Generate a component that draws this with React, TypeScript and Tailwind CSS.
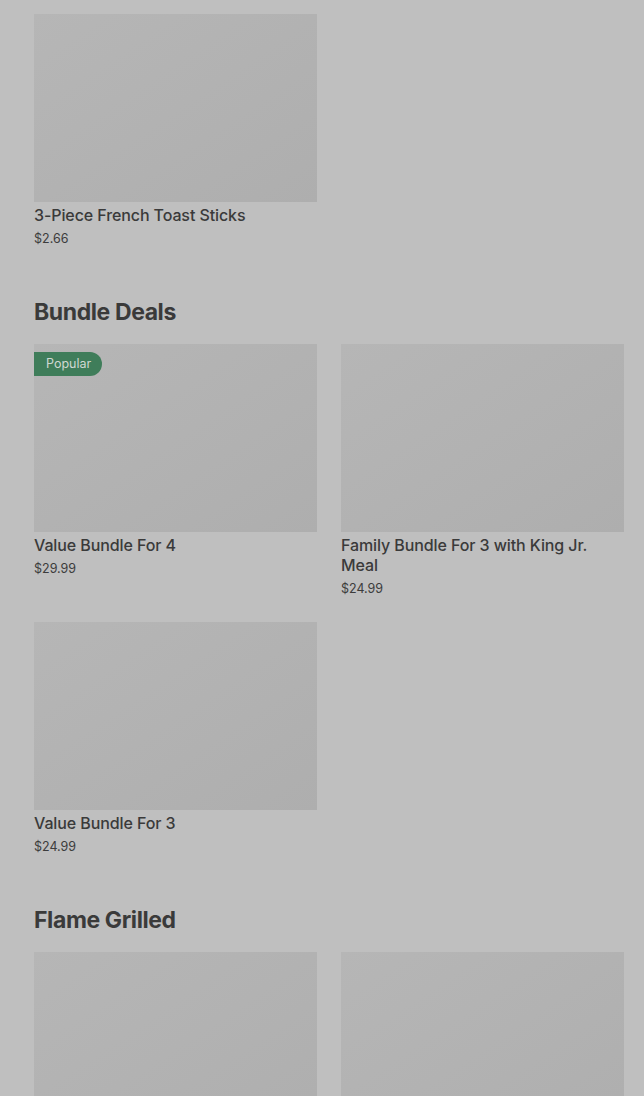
type Item = { name?: string; price?: string; badge?: string };

const sections: { title?: string; items: Item[] }[] = [
  { items: [{ name: "3-Piece French Toast Sticks", price: "$2.66" }] },
  {
    title: "Bundle Deals",
    items: [
      { name: "Value Bundle For 4", price: "$29.99", badge: "Popular" },
      { name: "Family Bundle For 3 with King Jr. Meal", price: "$24.99" },
      { name: "Value Bundle For 3", price: "$24.99" },
    ],
  },
  {
    // rest of this section is below the fold
    title: "Flame Grilled",
    items: [{}, {}],
  },
];

const Card = ({ item }: { item: Item }) => (
  <div className="flex flex-col">
    <div className="relative h-[188px] bg-gradient-to-br from-[#b6b6b6] to-[#aeaeae]">
      {item.badge && (
        <span className="absolute left-0 top-2 flex h-6 items-center rounded-r-full bg-[#3f7d5a] pl-3 pr-[11px] text-[12.5px] text-[#cfd8d2]">
          {item.badge}
        </span>
      )}
    </div>
    {item.name && (
      <div className="mt-[3px] text-[16px] leading-5 font-medium tracking-[-0.1px] text-[#3a3a3a]">
        {item.name}
      </div>
    )}
    {item.price && <div className="mt-1 text-[12.5px] leading-5 text-[#3c3c3c]">{item.price}</div>}
  </div>
);

export default function App() {
  return (
    <div className="h-[1096px] overflow-hidden bg-[#bfbfbf] pl-[34px] pr-5 pt-[14px] font-['Inter',sans-serif]">
      {sections.map((s, i) => (
        <section key={i} className={i > 0 ? "pt-[47px]" : ""}>
          {s.title && (
            <h2 className="mb-4 h-8 text-[23px] leading-8 font-bold tracking-[-0.4px] text-[#3a3a3a]">
              {s.title}
            </h2>
          )}
          <div className="grid grid-cols-2 gap-x-6 gap-y-[23px]">
            {s.items.map((it, j) => (
              <Card key={j} item={it} />
            ))}
          </div>
        </section>
      ))}
    </div>
  );
}
